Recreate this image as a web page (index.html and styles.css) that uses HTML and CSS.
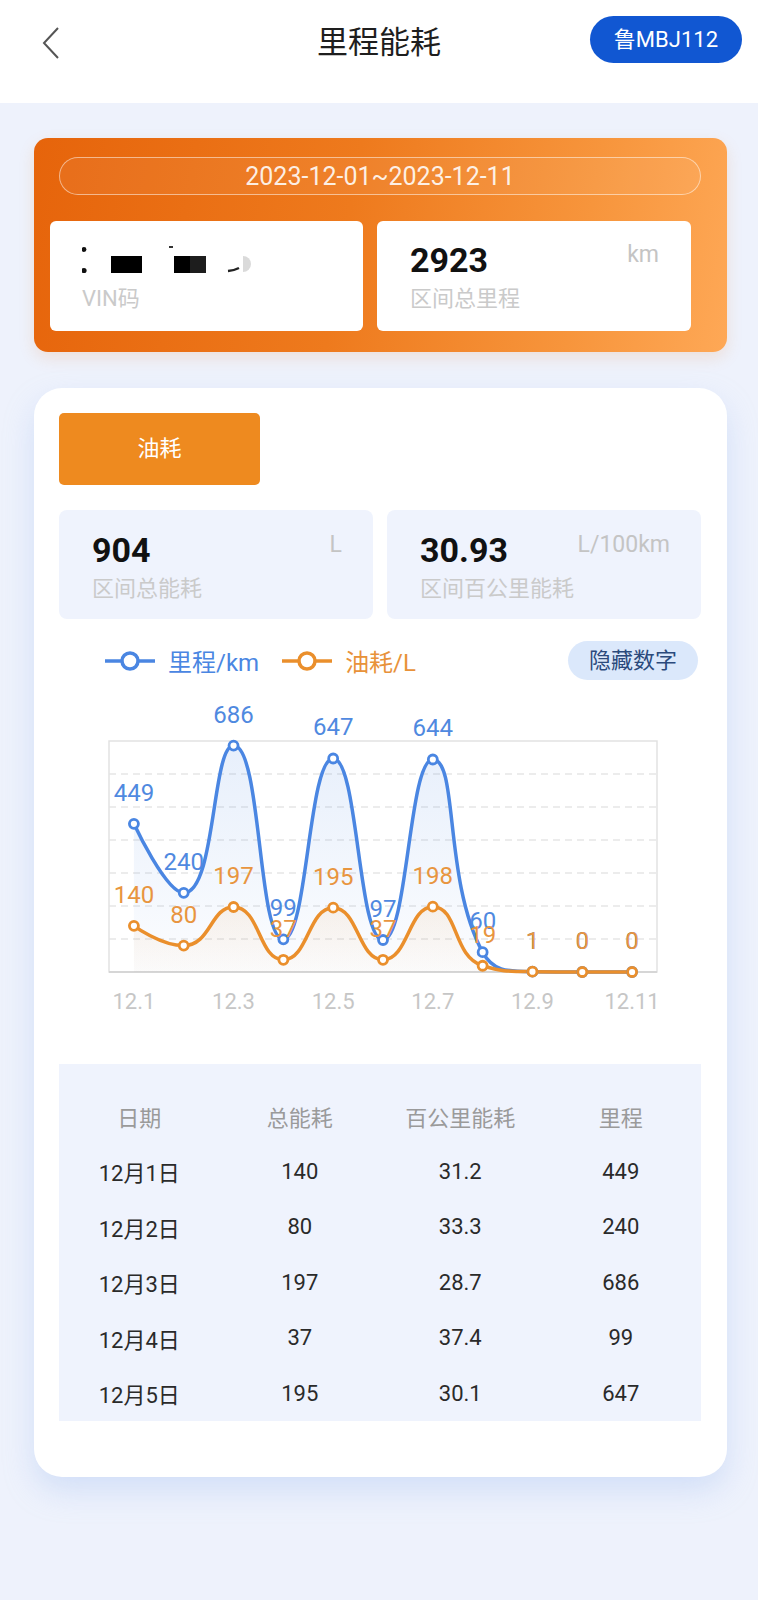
FILE: index.html
```html
<!DOCTYPE html>
<html lang="zh-CN">
<head>
    <meta charset="UTF-8">
    <title>里程能耗</title>
    <link rel="stylesheet" href="styles.css">
</head>
<body>
    <div class="header">
        <div class="back">
            <svg width="18" height="32" viewBox="0 0 18 32"><polyline points="16,1 2,16 16,31" fill="none" stroke="#555" stroke-width="2"/></svg>
        </div>
        <div class="title">里程能耗</div>
        <div class="plate">鲁MBJ112</div>
    </div>

    <div class="page">
        <div class="summary">
            <div class="date">2023-12-01~2023-12-11</div>
            <div class="info">
                <div class="info-card">
                    <div class="info-top">
                        <!-- 打码的VIN -->
                        <svg class="vin" width="180" height="30" viewBox="0 0 180 30">
                            <circle cx="2" cy="3.5" r="2.4" fill="#111"/>
                            <circle cx="2" cy="24.5" r="2.6" fill="#111"/>
                            <rect x="29" y="10" width="31" height="17" fill="#000"/>
                            <rect x="87" y="0" width="4" height="2" fill="#333"/>
                            <rect x="92" y="10" width="16" height="17" fill="#000"/>
                            <rect x="108" y="10" width="16" height="17" fill="#1d1d1d"/>
                            <path d="M161 10 A8 8 0 0 1 161 26 Z" fill="#dadada"/>
                            <path d="M146 25 Q152 24.5 157 22" fill="none" stroke="#222" stroke-width="2.5"/>
                        </svg>
                    </div>
                    <div class="info-label">VIN码</div>
                </div>
                <div class="info-card right">
                    <div class="info-top"><span class="num">2923</span><span class="unit">km</span></div>
                    <div class="info-label">区间总里程</div>
                </div>
            </div>
        </div>

        <div class="panel">
            <div class="tab">油耗</div>

            <div class="stats">
                <div class="stat">
                    <div class="info-top"><span class="num">904</span><span class="unit">L</span></div>
                    <div class="info-label">区间总能耗</div>
                </div>
                <div class="stat">
                    <div class="info-top"><span class="num">30.93</span><span class="unit">L/100km</span></div>
                    <div class="info-label">区间百公里能耗</div>
                </div>
            </div>

            <div class="legend-row">
                <div class="legend">
                    <span class="legend-item blue">
                        <svg width="50" height="22" viewBox="0 0 50 22"><line x1="0" y1="11" x2="50" y2="11" stroke="#4a86e2" stroke-width="3.5"/><circle cx="25" cy="11" r="8" fill="#fff" stroke="#4a86e2" stroke-width="3.5"/></svg>
                        里程/km
                    </span>
                    <span class="legend-item orange">
                        <svg width="50" height="22" viewBox="0 0 50 22"><line x1="0" y1="11" x2="50" y2="11" stroke="#ea8f2c" stroke-width="3.5"/><circle cx="25" cy="11" r="8" fill="#fff" stroke="#ea8f2c" stroke-width="3.5"/></svg>
                        油耗/L
                    </span>
                </div>
                <div class="toggle">隐藏数字</div>
            </div>

            <svg id="chart" class="chart" width="642" height="330" viewBox="0 0 642 330">
                <defs>
                    <linearGradient id="blueFill" x1="0" y1="0" x2="0" y2="1">
                        <stop offset="0" stop-color="#4a86e2" stop-opacity="0.13"/>
                        <stop offset="1" stop-color="#4a86e2" stop-opacity="0.02"/>
                    </linearGradient>
                    <linearGradient id="orangeFill" x1="0" y1="0" x2="0" y2="1">
                        <stop offset="0" stop-color="#f29a3c" stop-opacity="0.1"/>
                        <stop offset="1" stop-color="#f29a3c" stop-opacity="0.02"/>
                    </linearGradient>
                </defs>
            </svg>

            <div class="table">
                <div class="row head"><span>日期</span><span>总能耗</span><span>百公里能耗</span><span>里程</span></div>
                <div class="row"><span>12月1日</span><span>140</span><span>31.2</span><span>449</span></div>
                <div class="row"><span>12月2日</span><span>80</span><span>33.3</span><span>240</span></div>
                <div class="row"><span>12月3日</span><span>197</span><span>28.7</span><span>686</span></div>
                <div class="row"><span>12月4日</span><span>37</span><span>37.4</span><span>99</span></div>
                <div class="row"><span>12月5日</span><span>195</span><span>30.1</span><span>647</span></div>
            </div>
        </div>
    </div>

    <script>
        var miles = [449, 240, 686, 99, 647, 97, 644, 60, 1, 0, 0];
        var fuel = [140, 80, 197, 37, 195, 37, 198, 19, 1, 0, 0];
        var days = ["12.1", "", "12.3", "", "12.5", "", "12.7", "", "12.9", "", "12.11"];
        var chart = document.getElementById("chart");
        var NS = "http://www.w3.org/2000/svg";
        var gridLeft = 50, gridRight = 598, gridTop = 49, gridBottom = 280;
        var step = (gridRight - gridLeft) / miles.length;
        var ratio = (gridBottom - gridTop) / 700;

        function add(tag, attrs, text) {
            var el = document.createElementNS(NS, tag);
            for (var k in attrs) {
                el.setAttribute(k, attrs[k]);
            }
            if (text !== undefined) {
                el.textContent = text;
            }
            chart.appendChild(el);
            return el;
        }

        function toPoints(data) {
            return data.map(function (v, i) {
                return [gridLeft + step * (i + 0.5), gridBottom - v * ratio];
            });
        }

        function clamp(v, a, b) {
            return Math.max(Math.min(a, b), Math.min(v, Math.max(a, b)));
        }

        //仿echarts的smooth曲线，控制点不超过极值
        function smoothPath(p) {
            var s = 0.5;
            var d = "M" + p[0][0] + " " + p[0][1];
            var cx0 = p[0][0], cy0 = p[0][1];
            for (var i = 1; i < p.length; i++) {
                var px = p[i - 1][0], py = p[i - 1][1], x = p[i][0], y = p[i][1];
                var cx1 = x, cy1 = y, nx0 = x, ny0 = y;
                if (i < p.length - 1) {
                    var nx = p[i + 1][0], ny = p[i + 1][1];
                    var vx = nx - px, vy = ny - py;
                    var l0 = Math.hypot(x - px, y - py);
                    var l1 = Math.hypot(nx - x, ny - y);
                    var r = l1 / (l0 + l1);
                    nx0 = clamp(x + vx * s * r, x, nx);
                    ny0 = clamp(y + vy * s * r, y, ny);
                    vx = nx0 - x;
                    vy = ny0 - y;
                    cx1 = clamp(x - vx * l0 / l1, px, x);
                    cy1 = clamp(y - vy * l0 / l1, py, y);
                    vx = x - cx1;
                    vy = y - cy1;
                    nx0 = x + vx * l1 / l0;
                    ny0 = y + vy * l1 / l0;
                }
                d += " C" + cx0 + " " + cy0 + " " + cx1 + " " + cy1 + " " + x + " " + y;
                cx0 = nx0;
                cy0 = ny0;
            }
            return d;
        }

        //网格
        for (var v = 100; v < 700; v += 100) {
            var gy = gridBottom - v * ratio;
            add("line", {x1: gridLeft, y1: gy, x2: gridRight, y2: gy, stroke: "#e6e6e6", "stroke-width": 1.5, "stroke-dasharray": "7 5"});
        }
        add("rect", {x: gridLeft, y: gridTop, width: gridRight - gridLeft, height: gridBottom - gridTop, fill: "none", stroke: "#e2e2e2", "stroke-width": 1.5});
        add("line", {x1: gridLeft, y1: gridBottom, x2: gridRight, y2: gridBottom, stroke: "#d6d6d6", "stroke-width": 2});

        for (var i = 0; i < days.length; i++) {
            if (days[i]) {
                add("text", {x: gridLeft + step * (i + 0.5), y: 317, "text-anchor": "middle", "class": "axis-label"}, days[i]);
            }
        }

        var series = [
            {data: miles, color: "#4a86e2", text: "#4f89e0", fill: "url(#blueFill)"},
            {data: fuel, color: "#ea8f2c", text: "#e8953f", fill: "url(#orangeFill)"}
        ];
        series.forEach(function (s) {
            s.points = toPoints(s.data);
            s.path = smoothPath(s.points);
            var last = s.points[s.points.length - 1];
            add("path", {d: s.path + " L" + last[0] + " " + gridBottom + " L" + s.points[0][0] + " " + gridBottom + " Z", fill: s.fill});
        });
        series.forEach(function (s) {
            add("path", {d: s.path, fill: "none", stroke: s.color, "stroke-width": 3.5});
        });
        series.forEach(function (s) {
            s.points.forEach(function (p) {
                add("circle", {cx: p[0], cy: p[1], r: 4.5, fill: "#fff", stroke: s.color, "stroke-width": 2.8});
            });
        });
        series.forEach(function (s) {
            s.points.forEach(function (p, i) {
                add("text", {x: p[0], y: p[1] - 23, "text-anchor": "middle", fill: s.text, "class": "point-label"}, s.data[i]);
            });
        });
    </script>
</body>
</html>
```

FILE: styles.css
```css
* {
    margin: 0;
    padding: 0;
    box-sizing: border-box;
}

body {
    width: 758px;
    min-height: 1600px;
    background-color: #eef2fc;
    font-family: Roboto, "Noto Sans CJK SC", sans-serif;
    color: #222;
}

.header {
    height: 103px;
    background-color: #fff;
    display: grid;
    grid-template-columns: 1fr auto 1fr;
    align-items: start;
}

.back {
    margin: 27px 0 0 42px;
    height: 32px;
}

.back svg {
    display: block;
}

.title {
    margin-top: 23px;
    font-size: 31px;
    line-height: 40px;
    color: #1e1e1e;
}

.plate {
    justify-self: end;
    margin: 16px 16px 0 0;
    height: 47px;
    padding: 0 24px;
    border-radius: 24px;
    background-color: #1157d2;
    color: #fff;
    font-size: 22px;
    line-height: 47px;
}

.page {
    padding: 35px 31px 0 34px;
}

.summary {
    height: 214px;
    border-radius: 14px;
    padding-top: 19px;
    background: linear-gradient(100deg, #e6640b 0%, #ee7a1d 45%, #f7953c 78%, #fea856 100%);
    box-shadow: 0 6px 16px rgba(235, 120, 30, 0.15);
}

.date {
    margin: 0 26px 0 25px;
    height: 38px;
    border: 1.5px solid rgba(255, 255, 255, 0.5);
    border-radius: 19px;
    background-color: rgba(255, 255, 255, 0.06);
    text-align: center;
    font-size: 25px;
    line-height: 37px;
    color: rgba(255, 255, 255, 0.88);
}

.info {
    display: grid;
    grid-template-columns: 313px 314px;
    gap: 14px;
    margin: 26px 0 0 16px;
}

.info-card {
    height: 110px;
    background-color: #fff;
    border-radius: 6px;
    padding: 19px 32px 0 32px;
}

.info-card.right {
    padding-left: 33px;
}

.info-top {
    display: flex;
    justify-content: space-between;
    align-items: flex-start;
    height: 40px;
}

.vin {
    display: block;
    margin-top: 6px;
}

.num {
    font-size: 34px;
    font-weight: 700;
    line-height: 40px;
    color: #111;
}

.unit {
    font-size: 23px;
    line-height: 30px;
    color: #c4c4c4;
}

.info-label {
    margin-top: 5px;
    font-size: 22px;
    line-height: 28px;
    color: #cacaca;
}

.panel {
    margin-top: 36px;
    background-color: #fff;
    border-radius: 28px;
    padding: 25px 26px 56px 25px;
    box-shadow: 0 14px 30px rgba(160, 190, 240, 0.35);
}

.tab {
    width: 201px;
    height: 72px;
    border-radius: 5px;
    background-color: #ee8a1f;
    color: #fff;
    font-size: 22px;
    line-height: 72px;
    text-align: center;
}

.stats {
    display: grid;
    grid-template-columns: 1fr 1fr;
    gap: 14px;
    margin-top: 25px;
}

.stat {
    height: 109px;
    background-color: #eff3fd;
    border-radius: 8px;
    padding: 20px 31px 0 33px;
}

.legend-row {
    display: flex;
    justify-content: space-between;
    align-items: center;
    height: 39px;
    margin-top: 22px;
    padding: 0 3px 0 46px;
}

.legend {
    display: flex;
    align-items: center;
    font-size: 24px;
}

.legend-item {
    display: flex;
    align-items: center;
    gap: 13px;
}

.legend-item svg {
    display: block;
}

.legend-item + .legend-item {
    margin-left: 23px;
}

.blue {
    color: #4a86e2;
}

.orange {
    color: #e8923a;
}

.toggle {
    width: 130px;
    height: 39px;
    border-radius: 20px;
    background-color: #dbe8fb;
    color: #2b4a7c;
    font-size: 22px;
    line-height: 39px;
    text-align: center;
}

.chart {
    display: block;
    margin-top: 12px;
}

.axis-label {
    font-family: Roboto, sans-serif;
    font-size: 22px;
    fill: #c6c6c6;
}

.point-label {
    font-family: Roboto, sans-serif;
    font-size: 24px;
}

.table {
    margin-top: 42px;
    background-color: #eff3fd;
    padding-top: 24px;
}

.row {
    display: grid;
    grid-template-columns: repeat(4, 1fr);
    height: 55.5px;
    align-items: center;
    text-align: center;
    font-size: 22px;
    color: #2a2a2a;
}

.row.head {
    color: #9a9a9a;
}
```
